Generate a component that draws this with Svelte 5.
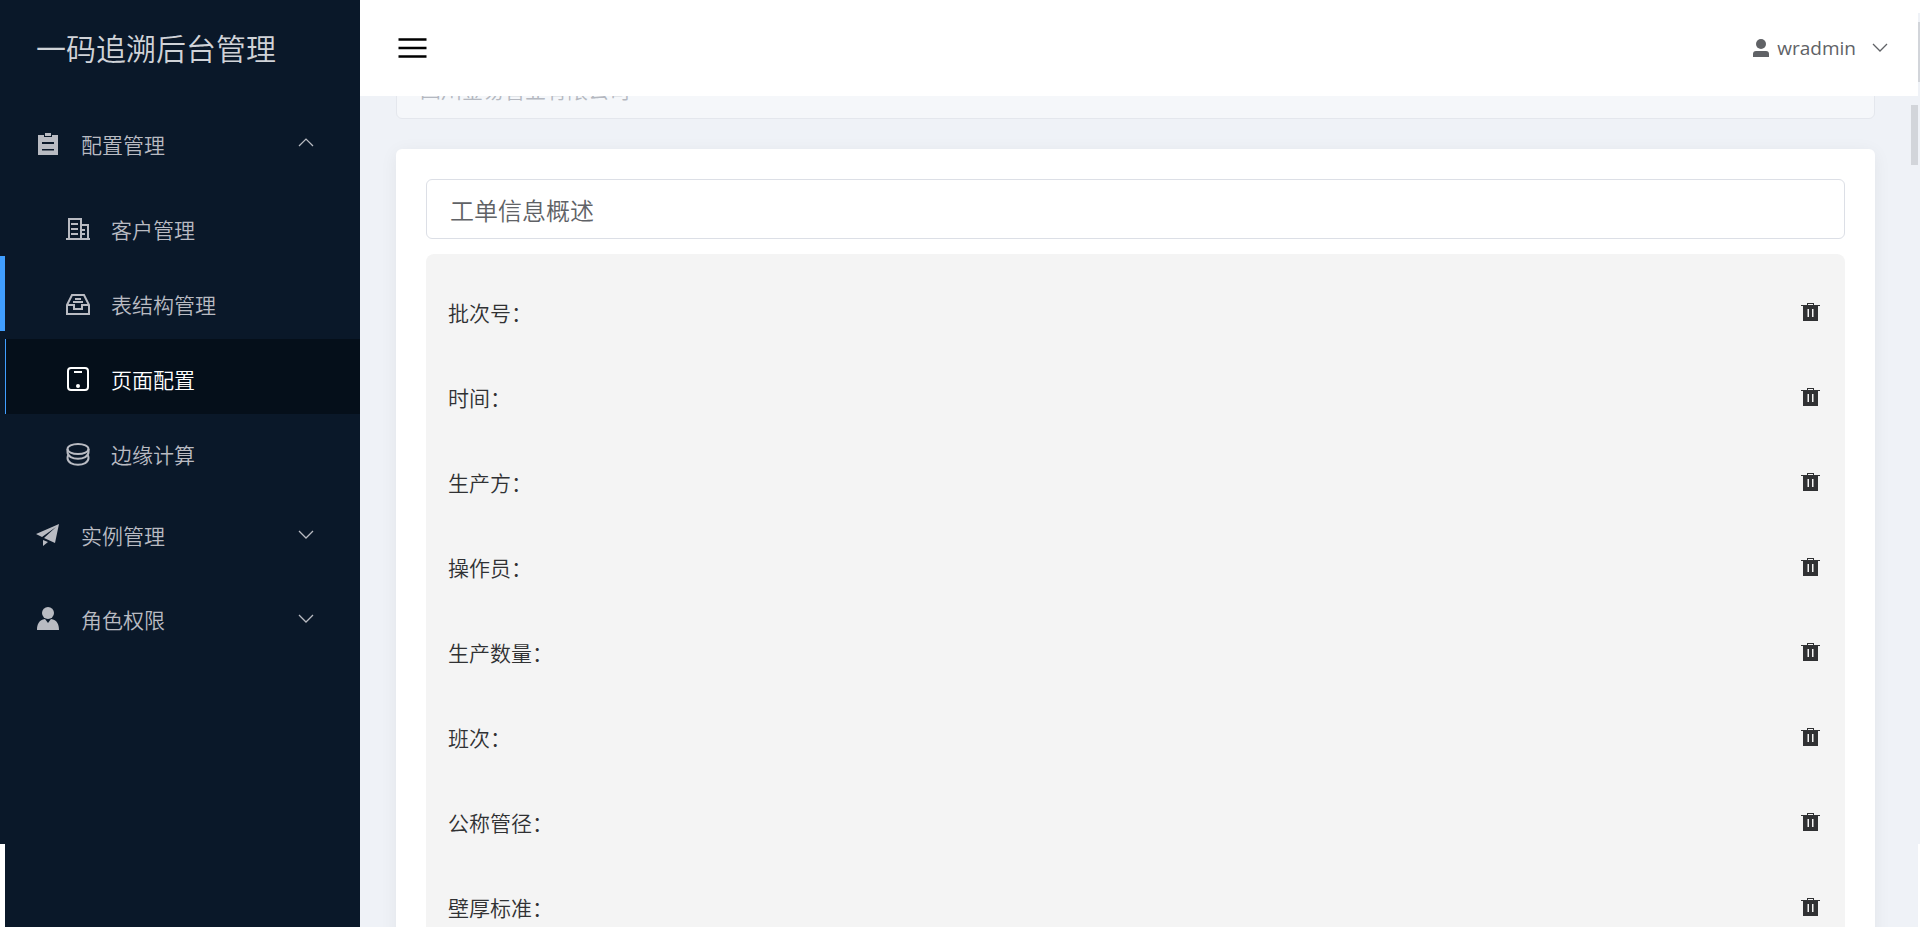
<script>
	let collapsed = $state(false);
	let title = $state('工单信息概述');
	let company = $state('四川金易管业有限公司');

	let fields = $state([
		'批次号',
		'时间',
		'生产方',
		'操作员',
		'生产数量',
		'班次',
		'公称管径',
		'壁厚标准'
	]);

	let menu = $state([
		{
			name: '配置管理',
			icon: 'clipboard',
			open: true,
			children: [
				{ name: '客户管理', icon: 'office' },
				{ name: '表结构管理', icon: 'messageBox' },
				{ name: '页面配置', icon: 'mobile' },
				{ name: '边缘计算', icon: 'coin' }
			]
		},
		{ name: '实例管理', icon: 'promotion', open: false, children: [] },
		{ name: '角色权限', icon: 'user', open: false, children: [] }
	]);

	let active = $state('页面配置');

	const remove = (i) => fields.splice(i, 1);
</script>

{#snippet Icon(name)}
	<svg class="icon" viewBox="0 0 24 24" aria-hidden="true">
		{#if name === 'clipboard'}
			<path
				fill="currentColor"
				fill-rule="evenodd"
				d="M2 3h6v2h8V3h6v20H2zM6 10v2h12v-2zM6 17v1.500h12V17zM9 1h6v3H9z"
			/>
		{:else if name === 'office'}
			<g fill="none" stroke="currentColor" stroke-width="2">
				<path d="M0 22h24M3 22V2h12v20M15 8h7v14" />
				<path d="M5 7h7M5 12h7M5 17h7M15 13h4M15 17h4" />
			</g>
		{:else if name === 'messageBox'}
			<g fill="none" stroke="currentColor" stroke-width="2">
				<path d="M1 13L6 3h12l5 10v9H1zM1 13h7v4h8v-4h7M9 7h6M7 10h10" />
			</g>
		{:else if name === 'mobile'}
			<rect
				x="2"
				y="1"
				width="20"
				height="22"
				rx="3"
				fill="none"
				stroke="currentColor"
				stroke-width="2"
			/>
			<path d="M8 5h8" stroke="currentColor" stroke-width="2" />
			<circle cx="12" cy="19" r="2" fill="currentColor" />
		{:else if name === 'coin'}
			<g fill="none" stroke="currentColor" stroke-width="2">
				<ellipse cx="12" cy="7" rx="10.500" ry="5" />
				<path d="M1.500 10c0 9 21 9 21 0M1.500 16c0 9 21 9 21 0M1.500 7v3M22.500 7v3" />
				<path d="M1.500 16c0-2 0-2 1-3M22.500 16c0-2 0-2-1-3" />
			</g>
		{:else if name === 'promotion'}
			<path fill="currentColor" d="M0 11L23 1l-4 19-11-5 12-11L6 14zM7 17l5 2-5 4z" />
		{:else}
			<circle cx="12" cy="6" r="6" fill="currentColor" />
			<path fill="currentColor" d="M1 23c0-6 2-10 8-11l3 4 3-4c6 1 8 5 8 11z" />
		{/if}
	</svg>
{/snippet}

<div class="layout">
	{#if !collapsed}
		<aside class="sidebar">
			<h1 class="brand">一码追溯后台管理</h1>
			<nav>
				{#each menu as group}
					<button class="group" onclick={() => (group.open = !group.open)}>
						{@render Icon(group.icon)}
						<span>{group.name}</span>
						<svg class="arrow" class:up={group.open} viewBox="0 0 16 16" aria-hidden="true">
							<path d="M1 4l7 7 7-7" />
						</svg>
					</button>
					{#if group.open && group.children.length}
						<div class="children">
							{#each group.children as item}
								<button
									class="item"
									class:active={item.name === active}
									onclick={() => (active = item.name)}
								>
									{@render Icon(item.icon)}
									<span>{item.name}</span>
								</button>
							{/each}
						</div>
					{/if}
				{/each}
			</nav>
		</aside>
	{/if}

	<div class="main">
		<header class="topbar">
			<button class="toggle" aria-label="菜单" onclick={() => (collapsed = !collapsed)}>
				<svg viewBox="0 0 28 20" aria-hidden="true">
					<path d="M0 1.500h28M0 10h28M0 18.500h28" />
				</svg>
			</button>
			<button class="account">
				<svg class="avatar" viewBox="0 0 16 18" aria-hidden="true">
					<circle cx="8" cy="5" r="5" />
					<path d="M0 18v-3c0-2 1-3 3-3h10c2 0 3 1 3 3v3z" />
				</svg>
				<span>wradmin</span>
				<svg class="arrow" viewBox="0 0 16 16" aria-hidden="true">
					<path d="M1 4l7 7 7-7" />
				</svg>
			</button>
		</header>

		<div class="content">
			<input class="company" aria-label="公司" disabled bind:value={company} />

			<section class="card">
				<input class="title" aria-label="标题" bind:value={title} />
				<ul class="fields">
					{#each fields as field, i}
						<li>
							<span>{field}：</span>
							<button class="remove" aria-label="删除" onclick={() => remove(i)}>
								<svg viewBox="0 0 20 20" aria-hidden="true">
									<path
										fill-rule="evenodd"
										d="M1 3h6V1h7v2h6v1h-2v15H3V4H1zM8 2v1h5V2zM7.500 7v8H9V7zM12 7v8h1.500V7z"
									/>
								</svg>
							</button>
						</li>
					{/each}
				</ul>
			</section>
		</div>
	</div>

	<!-- Scroll thumbs and page edges -->
	<div class="thumb"></div>
	<div class="edge left"></div>
	<div class="edge left-end"></div>
	<div class="edge right"></div>
	<div class="edge right-end"></div>
</div>

<style>
	:global(body) {
		overflow: hidden;
		font-family: 'Open Sans', 'Noto Sans CJK SC', sans-serif;
		font-weight: 350;
	}

	button,
	input {
		font: inherit;
		color: inherit;
		box-sizing: border-box;
	}

	button {
		border: none;
		background: none;
		padding: 0;
		cursor: pointer;
	}

	.layout {
		position: relative;
		display: flex;
		height: 100vh;
		overflow: hidden;
		background: #eff2f7;
	}

	.sidebar {
		flex: 0 0 360px;
		background: #0a1829;
		color: #b9bbc2;
		font-size: 21px;
	}

	.brand {
		margin: 0;
		padding: 0 36px;
		font-size: 30px;
		font-weight: 350;
		line-height: 98px;
		margin-bottom: 2px;
		color: #d0d3d8;
	}

	.group {
		display: flex;
		align-items: center;
		width: 100%;
		height: 84px;
		padding: 4px 46px 0 36px;
		gap: 21px;
	}

	.icon {
		width: 24px;
		height: 24px;
		flex: none;
	}

	.arrow {
		width: 16px;
		height: 16px;
		margin-left: auto;
		fill: none;
		stroke: currentColor;
		stroke-width: 1.3;
	}

	.arrow.up {
		transform: scaleY(-1);
		transform-origin: 50% 44%;
	}

	.children {
		padding: 5px 0 2px 5px;
	}

	.item {
		display: flex;
		align-items: center;
		width: 100%;
		height: 75px;
		gap: 21px;
		padding: 5px 0 0 60px;
		border-left: 1px solid transparent;
	}

	.item.active {
		background: #050f1a;
		border-left-color: #409eff;
		color: #fff;
	}

	.main {
		flex: 1;
		min-width: 0;
		display: flex;
		flex-direction: column;
	}

	.topbar {
		position: relative;
		z-index: 1;
		flex: none;
		display: flex;
		justify-content: space-between;
		align-items: center;
		height: 96px;
		padding: 0 32px 0 38px;
		background: #fff;
	}

	.toggle svg {
		display: block;
		width: 29px;
		height: 20px;
		stroke: #000;
		stroke-width: 2.5;
	}

	.account {
		display: flex;
		align-items: center;
		gap: 8px;
		font-size: 19px;
		font-weight: 400;
		color: #606266;
	}

	.account .arrow {
		margin-left: 8px;
	}

	.avatar {
		width: 16px;
		height: 18px;
		fill: currentColor;
	}

	.content {
		flex: 1;
		min-height: 0;
		margin-top: -37px;
		padding: 0 45px 0 36px;
	}

	.company {
		display: block;
		width: 100%;
		height: 60px;
		padding: 0 23px;
		border: 1px solid #e4e7ed;
		border-radius: 6px;
		background: #f5f7fa;
		font-size: 21px;
		color: #b4b8c0;
	}

	.card {
		margin-top: 30px;
		padding: 30px;
		border-radius: 6px;
		background: #fff;
		box-shadow: 0 3px 18px rgba(0, 0, 0, 0.06);
	}

	.title {
		display: block;
		width: 100%;
		height: 60px;
		padding: 0 23px;
		border: 1px solid #dcdfe6;
		border-radius: 6px;
		background: #fff;
		font-size: 24px;
		color: #606266;
	}

	.fields {
		margin: 15px 0 0;
		padding: 15px 25px 15px 22px;
		list-style: none;
		border-radius: 8px;
		background: #f4f4f4;
		font-size: 21px;
		color: #303133;
	}

	.fields li {
		display: flex;
		justify-content: space-between;
		align-items: center;
		height: 85px;
	}

	.remove svg {
		display: block;
		width: 20px;
		height: 20px;
		fill: #303133;
	}

	.thumb {
		position: absolute;
		top: 105px;
		right: 2px;
		width: 7px;
		height: 60px;
		background: #d2d5da;
	}

	.edge {
		position: absolute;
		z-index: 2;
	}

	.left {
		top: 256px;
		left: 0;
		width: 5px;
		height: 75px;
		background: #409eff;
	}

	.left-end {
		top: 844px;
		bottom: 0;
		left: 0;
		width: 5px;
		background: #fff;
	}

	.right {
		top: 13px;
		right: 0;
		width: 2px;
		height: 83px;
		background: linear-gradient(#eff2f7 9px, #d2d5da 9px 69px, #eff2f7 69px);
	}

	.right-end {
		top: 844px;
		right: 0;
		bottom: 0;
		width: 2px;
		background: #fff;
	}
</style>
